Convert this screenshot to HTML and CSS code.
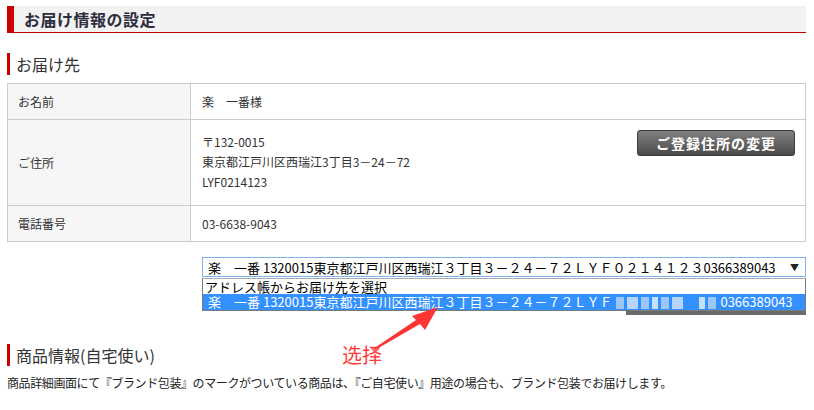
FILE: index.html
```html
<!DOCTYPE html>
<html lang="ja">
<head>
<meta charset="utf-8">
<link rel="stylesheet" href="styles.css">
</head>
<body>
<div class="page">
  <h1 class="page-title">お届け情報の設定</h1>

  <h2 class="sec-title sec-first">お届け先</h2>

  <table class="info">
    <tr class="row-short">
      <th>お名前</th>
      <td>楽　一番様</td>
    </tr>
    <tr>
      <th>ご住所</th>
      <td>
        <div class="addr-cell">
          <div class="addr">〒132-0015<br>東京都江戸川区西瑞江3丁目3－24－72<br>LYF0214123</div>
          <div class="btn">ご登録住所の変更</div>
        </div>
      </td>
    </tr>
    <tr class="row-short">
      <th>電話番号</th>
      <td>03-6638-9043</td>
    </tr>
  </table>

  <div class="select-row">
    <div class="select-wrap">
      <div class="select">
        <span class="sel-text">楽　一番 1320015東京都江戸川区西瑞江３丁目３－２４－７２ＬＹＦ０２１４１２３0366389043</span>
        <span class="caret">▼</span>
      </div>
      <div class="dropdown">
        <div class="opt">アドレス帳からお届け先を選択</div>
        <div class="opt opt-sel">楽　一番 1320015東京都江戸川区西瑞江３丁目３－２４－７２ＬＹＦ<span class="blur"><i></i><i class="w2"></i><i></i><i class="w3"></i><i></i><i class="w2"></i><i class="gap"></i><i class="w3"></i><i></i></span>0366389043</div>
      </div>
      <div class="drop-shadow"></div>
    </div>
  </div>

  <h2 class="sec-title sec-second">商品情報(自宅使い)</h2>
  <p class="note">商品詳細画面にて『ブランド包装』のマークがついている商品は、『ご自宅使い』用途の場合も、ブランド包装でお届けします。</p>

  <svg class="anno-arrow" width="70" height="50" viewBox="0 0 70 50">
    <polygon points="3,46 46,17 42,13 68,4 55,27 50,21 5,47" fill="#ff3535"/>
  </svg>
  <div class="anno-text">选择</div>
</div>
</body>
</html>
```
FILE: styles.css
```css
html, body {
  margin: 0;
  padding: 0;
  background: #fff;
}
body {
  font-family: "Noto Sans CJK JP", "Noto Sans", sans-serif;
  color: #333;
}
.page {
  position: relative;
  width: 799px;
  padding: 6px 0 0 7px;
}
.page-title {
  margin: 0;
  height: 26px;
  line-height: 26px;
  background: #f2f2f2;
  border-left: 7px solid #d00000;
  border-bottom: 1px solid #c00000;
  padding-left: 10px;
  font-size: 16px;
  font-weight: bold;
  color: #2d2d3d;
  letter-spacing: 0.5px;
}
.sec-title {
  margin: 0;
  border-left: 3px solid #cc0000;
  padding-left: 6px;
  height: 22px;
  line-height: 22px;
  font-size: 16px;
  font-weight: normal;
  color: #333;
}
.sec-first {
  margin-top: 20px;
}
.info {
  margin-top: 8px;
  width: 799px;
  border-collapse: collapse;
  font-size: 12px;
  color: #333;
}
.info th, .info td {
  border: 1px solid #cccccc;
  text-align: left;
  font-weight: normal;
  vertical-align: middle;
}
.info th {
  width: 172px;
  background: #f6f6f6;
  padding: 0 0 0 10px;
}
.info td {
  padding: 0 10px 0 11px;
}
.row-short th, .row-short td {
  height: 35px;
}
.addr-cell {
  display: flex;
  justify-content: space-between;
  align-items: flex-start;
  padding: 10px 0 11px;
}
.addr {
  line-height: 20px;
  padding-top: 2px;
  height: 62px;
}
.btn {
  width: 156px;
  height: 24px;
  line-height: 24px;
  text-align: center;
  color: #fff;
  font-size: 14px;
  font-weight: bold;
  letter-spacing: 1px;
  background: linear-gradient(#808080, #4a4a4a);
  border: 1px solid #3c3c3c;
  border-radius: 3px;
}
.select-row {
  display: flex;
  justify-content: flex-end;
  margin-top: 15px;
  height: 20px;
}
.select-wrap {
  position: relative;
  width: 604px;
}
.select {
  height: 18px;
  border: 1px solid #7fb2e8;
  display: flex;
  justify-content: space-between;
  align-items: center;
  gap: 6px;
  padding: 0 6px 0 5px;
  font-size: 13px;
  color: #000;
  white-space: nowrap;
  overflow: hidden;
}
.sel-text {
  overflow: hidden;
}
.caret {
  flex: none;
  font-size: 9px;
  color: #222;
}
.dropdown {
  position: absolute;
  left: 0;
  top: 21px;
  width: 602px;
  border: 1px solid #7a7a7a;
  border-top-color: #aaa;
  background: #fff;
  z-index: 3;
  font-size: 13px;
  color: #000;
  white-space: nowrap;
}
.opt {
  height: 15px;
  line-height: 15px;
  padding-left: 2px;
}
.opt-sel {
  height: 16px;
  line-height: 16px;
  background: #3390ff;
  color: #fff;
  padding-left: 5px;
}
.blur {
  display: inline-flex;
  gap: 3px;
  vertical-align: middle;
  margin: 0 4px;
  height: 12px;
}
.blur i {
  display: block;
  width: 8px;
  height: 12px;
  background: #9cc6f8;
}
.blur i.w2 { width: 11px; background: #b7d5fa; }
.blur i.w3 { width: 6px; background: #c9e0fb; }
.blur i.gap { width: 10px; background: transparent; }
.drop-shadow {
  position: absolute;
  left: 424px;
  top: 54px;
  width: 180px;
  height: 4px;
  background: #6a6a6a;
  z-index: 2;
}
.sec-second {
  margin-top: 67px;
}
.note {
  margin: 8px 0 0;
  font-size: 12px;
  letter-spacing: -0.4px;
  color: #222;
}
.anno-arrow {
  position: absolute;
  left: 370px;
  top: 303px;
  z-index: 4;
}
.anno-text {
  position: absolute;
  left: 342px;
  top: 343px;
  font-family: "Noto Sans CJK SC", sans-serif;
  font-size: 20px;
  line-height: 24px;
  color: #ff3b3b;
  z-index: 4;
}
```
